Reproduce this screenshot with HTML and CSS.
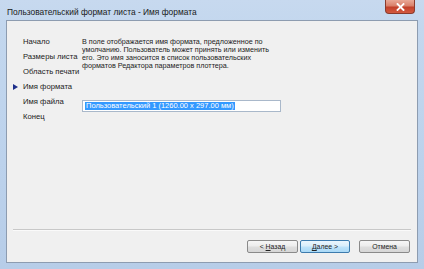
FILE: index.html
```html
<!DOCTYPE html>
<html lang="ru">
<head>
<meta charset="utf-8">
<title>Пользовательский формат листа - Имя формата</title>
<link rel="stylesheet" href="styles.css">
</head>
<body>
<div class="window">
  <div class="titlebar">
    <span class="title">Пользовательский формат листа - Имя формата</span>
    <span class="close"><svg width="9" height="8" viewBox="0 0 9 8"><path d="M1.5 1 L7.5 7 M7.5 1 L1.5 7" stroke="#fff" stroke-width="1.8" stroke-linecap="square"/></svg></span>
  </div>
  <div class="client">
    <div class="main">
      <ul class="nav">
        <li class="item"><span class="mark"></span><span>Начало</span></li>
        <li class="item"><span class="mark"></span><span>Размеры листа</span></li>
        <li class="item"><span class="mark"></span><span>Область печати</span></li>
        <li class="item current"><span class="mark"><svg width="5" height="6" viewBox="0 0 5 6"><path d="M0 0 L5 3 L0 6 Z" fill="#1d2f8a"/></svg></span><span>Имя формата</span></li>
        <li class="item"><span class="mark"></span><span>Имя файла</span></li>
        <li class="item"><span class="mark"></span><span>Конец</span></li>
      </ul>
      <div class="content">
        <p class="desc">В поле отображается имя формата, предложенное по умолчанию. Пользователь может принять или изменить его. Это имя заносится в список пользовательских форматов Редактора параметров плоттера.</p>
        <div class="field"><span class="sel">Пользовательский 1 (1260.00 x 297.00 мм)</span></div>
      </div>
    </div>
    <div class="sep"></div>
    <div class="buttons">
      <button class="btn back">&lt; <u>Н</u>азад</button>
      <button class="btn next"><u>Д</u>алее &gt;</button>
      <button class="btn cancel">Отмена</button>
    </div>
  </div>
</div>
</body>
</html>
```
FILE: styles.css
```css
html, body {
  margin: 0;
  padding: 0;
  width: 424px;
  height: 269px;
  overflow: hidden;
  font-family: "Liberation Sans", Arial, sans-serif;
}
.window {
  box-sizing: border-box;
  width: 424px;
  height: 269px;
  display: flex;
  flex-direction: column;
  padding: 0 6px 6px 6px;
  background: linear-gradient(180deg, #c7d9ef 0%, #c3d7ee 10%, #bcd2ec 60%, #b7cde8 100%);
}
.titlebar {
  height: 20px;
  display: flex;
  align-items: flex-start;
}
.title {
  font-size: 8.4px;
  color: #1a1a1a;
  padding: 7px 0 0 1px;
  line-height: 10px;
}
.close {
  margin-left: auto;
  margin-right: 3px;
  width: 30px;
  height: 14px;
  box-sizing: border-box;
  display: flex;
  align-items: center;
  justify-content: center;
  border: 1px solid #8a3a2c;
  border-top: none;
  border-radius: 0 0 4px 4px;
  background: linear-gradient(180deg, #e9a896 0%, #d9806a 45%, #c2402a 55%, #d35a40 100%);
}
.client {
  flex: 1;
  display: flex;
  flex-direction: column;
  background: #f0f0f0;
  border: 1px solid #8d9cb0;
}
.main {
  display: flex;
  padding-top: 13px;
  flex: 1;
}
.nav {
  list-style: none;
  margin: 0;
  padding: 0 0 0 6px;
  width: 69px;
  font-size: 7.7px;
  color: #222;
}
.item {
  display: flex;
  align-items: center;
  height: 15px;
  white-space: nowrap;
}
.mark {
  width: 10px;
  display: flex;
  align-items: center;
}
.content {
  padding-top: 4px;
}
.desc {
  margin: 0;
  width: 200px;
  font-size: 7.2px;
  line-height: 8.1px;
  color: #222;
}
.field {
  margin-top: 30px;
  width: 199px;
  height: 12px;
  box-sizing: border-box;
  border: 1px solid #a9b8ca;
  background: #fff;
  display: flex;
  align-items: center;
  padding-left: 2px;
}
.sel {
  background: #3399ff;
  color: #fff;
  font-size: 7.5px;
  line-height: 8px;
  padding: 0 1px;
  white-space: nowrap;
}
.sep {
  height: 1px;
  margin: 0 6px;
  background: #c8c8c8;
  border-bottom: 1px solid #fafafa;
}
.buttons {
  display: flex;
  justify-content: flex-end;
  padding: 9px 7px 9px 0;
}
.btn {
  box-sizing: border-box;
  height: 13px;
  width: 51px;
  padding: 0;
  font-family: "Liberation Sans", Arial, sans-serif;
  font-size: 6.9px;
  color: #222;
  border: 1px solid #8a8a8a;
  border-radius: 2px;
  background: linear-gradient(180deg, #f6f6f6 0%, #ececec 48%, #dedede 52%, #d6d6d6 100%);
}
.next {
  margin-left: 2px;
  width: 50px;
  border-color: #3d7bad;
  background: linear-gradient(180deg, #eaf6fd 0%, #d9eefb 48%, #bfe3f9 52%, #a9d9f7 100%);
}
.cancel {
  margin-left: 9px;
}
```
